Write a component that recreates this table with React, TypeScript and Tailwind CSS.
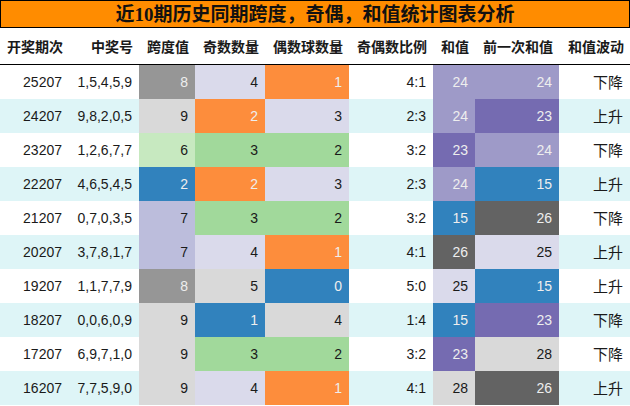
import React from "react";

const C = {
  g8: "bg-[#969696] text-[#eeeeee]",
  g9: "bg-[#d9d9d9] text-[#1a1a1a]",
  lav: "bg-[#dadaeb] text-[#1a1a1a]",
  org: "bg-[#fd8d3c] text-[#eeeeee]",
  blu: "bg-[#3182bd] text-[#eeeeee]",
  grn: "bg-[#a1d99b] text-[#1a1a1a]",
  lgr: "bg-[#c7e9c0] text-[#1a1a1a]",
  lpu: "bg-[#bcbddc] text-[#1a1a1a]",
  mpu: "bg-[#9e9ac8] text-[#eeeeee]",
  dpu: "bg-[#756bb1] text-[#eeeeee]",
  dgy: "bg-[#636363] text-[#eeeeee]",
};

type Row = [string, string, string, string, string, string, string, string, string, string, string, string, string, string];
// id, nums, span, spanCls, odd, oddCls, even, evenCls, ratio, sum, sumCls, prev, prevCls, trend
const rows: Row[] = [
  ["25207", "1,5,4,5,9", "8", C.g8, "4", C.lav, "1", C.org, "4:1", "24", C.mpu, "24", C.mpu, "下降"],
  ["24207", "9,8,2,0,5", "9", C.g9, "2", C.org, "3", C.lav, "2:3", "24", C.mpu, "23", C.dpu, "上升"],
  ["23207", "1,2,6,7,7", "6", C.lgr, "3", C.grn, "2", C.grn, "3:2", "23", C.dpu, "24", C.mpu, "下降"],
  ["22207", "4,6,5,4,5", "2", C.blu, "2", C.org, "3", C.lav, "2:3", "24", C.mpu, "15", C.blu, "上升"],
  ["21207", "0,7,0,3,5", "7", C.lpu, "3", C.grn, "2", C.grn, "3:2", "15", C.blu, "26", C.dgy, "下降"],
  ["20207", "3,7,8,1,7", "7", C.lpu, "4", C.lav, "1", C.org, "4:1", "26", C.dgy, "25", C.lav, "上升"],
  ["19207", "1,1,7,7,9", "8", C.g8, "5", C.g9, "0", C.blu, "5:0", "25", C.lav, "15", C.blu, "上升"],
  ["18207", "0,0,6,0,9", "9", C.g9, "1", C.blu, "4", C.g9, "1:4", "15", C.blu, "23", C.dpu, "下降"],
  ["17207", "6,9,7,1,0", "9", C.g9, "3", C.grn, "2", C.grn, "3:2", "23", C.dpu, "28", C.g9, "下降"],
  ["16207", "7,7,5,9,0", "9", C.g9, "4", C.lav, "1", C.org, "4:1", "28", C.g9, "26", C.dgy, "上升"],
];

const headers = ["开奖期次", "中奖号", "跨度值", "奇数数量", "偶数球数量", "奇偶数比例", "和值", "前一次和值", "和值波动"];

const grid = "grid grid-cols-[69px_70px_56px_70px_84px_84px_42px_84px_71px]";
const cell = "flex items-center justify-end pr-[7px] text-[14px] whitespace-nowrap";
const plain = "text-[#1a1a1a]";

export default function App() {
  return (
    <div className="w-[630px] h-[406px] bg-white overflow-hidden font-['Liberation_Sans','Noto_Sans_CJK_SC',sans-serif]">
      <div className="h-[28px] border border-black bg-[#ff8c00] flex items-center justify-center">
        <span className="text-[19px] font-bold text-[#111] leading-none font-['Liberation_Serif','Noto_Sans_CJK_SC',serif]">
          近10期历史同期跨度，奇偶，和值统计图表分析
        </span>
      </div>
      <div className={`${grid} h-[37px] border-b border-black`}>
        {headers.map((h) => (
          <div
            key={h}
            className="flex items-center justify-end pr-[6px] text-[14px] font-bold text-[#1a1a1a] whitespace-nowrap font-['Noto_Sans_CJK_SC',sans-serif]"
          >
            {h}
          </div>
        ))}
      </div>
      {rows.map((r, i) => (
        <div key={r[0]} className={`${grid} h-[34px] ${i % 2 === 0 ? "bg-white" : "bg-[#def5f7]"}`}>
          <div className={`${cell} ${plain} ml-px`}>{r[0]}</div>
          <div className={`${cell} ${plain}`}>{r[1]}</div>
          <div className={`${cell} ${r[3]}`}>{r[2]}</div>
          <div className={`${cell} ${r[5]}`}>{r[4]}</div>
          <div className={`${cell} ${r[7]}`}>{r[6]}</div>
          <div className={`${cell} ${plain}`}>{r[8]}</div>
          <div className={`${cell} ${r[10]}`}>{r[9]}</div>
          <div className={`${cell} ${r[12]}`}>{r[11]}</div>
          <div className={`${cell} ${plain}`}>
            <span className="text-[15px] font-['Noto_Sans_CJK_SC',sans-serif]">{r[13]}</span>
          </div>
        </div>
      ))}
    </div>
  );
}
